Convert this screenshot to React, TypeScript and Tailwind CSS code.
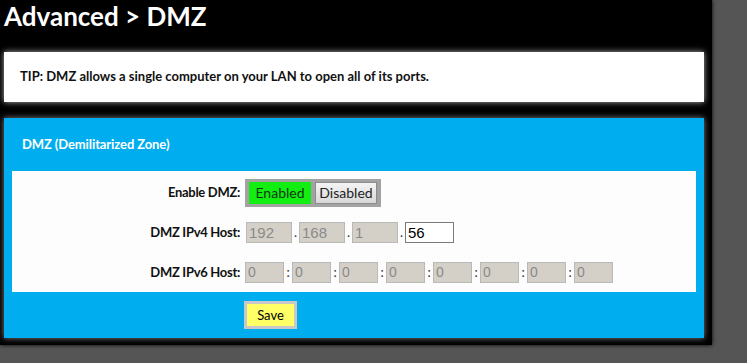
import React from "react";

const ipv4 = ["192", "168", "1", "56"];
const ipv6 = ["0", "0", "0", "0", "0", "0", "0", "0"];

function Field({ value, active }: { value: string; active?: boolean }) {
  return (
    <div
      className={
        active
          ? "w-[49px] h-[21px] border border-[#7a7a7a] bg-white text-black pl-[2px] text-[15px] leading-[19px]"
          : "w-[46px] h-[21px] border border-[#b9b9b9] bg-[#d4d0c8] text-[#8a8a8a] pl-[2px] text-[15px] leading-[19px]"
      }
      style={{ fontFamily: "'Liberation Sans', Arial, sans-serif" }}
    >
      {value}
    </div>
  );
}

export default function App() {
  return (
    <div className="w-[747px] h-[363px] bg-[#555555] overflow-hidden font-['Lato',sans-serif]">
      <div className="w-[712px] h-[345px] bg-black px-[4px] shadow-[0_0_4px_#000]">
        <h1 className="h-[52px] pt-[1px] text-white text-[26px] font-bold leading-[30px]">
          Advanced &gt; DMZ
        </h1>

        <div className="w-[700px] h-[50px] bg-white shadow-[0_0_6px_rgba(220,220,220,0.8)] flex items-center pl-[16px]">
          <p className="text-[13px] font-bold text-[#111]">
            TIP: DMZ allows a single computer on your LAN to open all of its ports.
          </p>
        </div>

        <div className="mt-[16px] w-[700px] h-[220px] bg-[#00adef] shadow-[0_0_6px_rgba(160,160,160,0.8)]">
          <div className="h-[53px] flex items-center pl-[18px] text-white text-[13px] font-bold tracking-[-0.1px]">
            DMZ (Demilitarized Zone)
          </div>

          <div className="mx-[8px] h-[121px] bg-[#fdfdfd] pt-[8px]">
            <div className="flex items-center h-[28px]">
              <span className="w-[228px] text-right text-[13px] font-bold text-[#111] tracking-[-0.3px]">
                Enable DMZ:
              </span>
              <div className="ml-[5px] h-[28px] bg-[#a3a3a3] flex items-center gap-[4px] px-[4px]">
                <button className="w-[62px] h-[22px] bg-[#12ee12] text-[#123812] text-[14px] leading-none">
                  Enabled
                </button>
                <button className="w-[62px] h-[22px] border border-[#8c8c8c] bg-gradient-to-b from-[#f4f4f4] to-[#d8d8d8] text-[#222] text-[14px] leading-none">
                  Disabled
                </button>
              </div>
            </div>

            <div className="flex items-center h-[21px] mt-[15px]">
              <span className="w-[228px] text-right text-[13px] font-bold text-[#111] tracking-[-0.3px]">
                DMZ IPv4 Host:
              </span>
              <div className="ml-[6px] flex items-center">
                {ipv4.map((v, i) => (
                  <div key={i} className="flex items-center">
                    {i > 0 && <span className="w-[7px] text-center text-[13px] text-[#333]">.</span>}
                    <Field value={v} active={i === 3} />
                  </div>
                ))}
              </div>
            </div>

            <div className="flex items-center h-[21px] mt-[19px]">
              <span className="w-[228px] text-right text-[13px] font-bold text-[#111] tracking-[-0.3px]">
                DMZ IPv6 Host:
              </span>
              <div className="ml-[5px] flex items-center">
                {ipv6.map((v, i) => (
                  <div key={i} className="flex items-center">
                    {i > 0 && <span className="w-[8px] text-center text-[13px] text-[#333]">:</span>}
                    <div
                      className="w-[39px] h-[21px] border border-[#b9b9b9] bg-[#d4d0c8] text-[#8a8a8a] pl-[2px] text-[14px] leading-[19px]"
                      style={{ fontFamily: "'Liberation Sans', Arial, sans-serif" }}
                    >
                      {v}
                    </div>
                  </div>
                ))}
              </div>
            </div>
          </div>

          <div className="pl-[240px] pt-[9px]">
            <button className="w-[53px] h-[28px] border-[3px] border-[#c8c8c8] bg-[#ffff66] text-[13px] text-black leading-none">
              Save
            </button>
          </div>
        </div>
      </div>
    </div>
  );
}
